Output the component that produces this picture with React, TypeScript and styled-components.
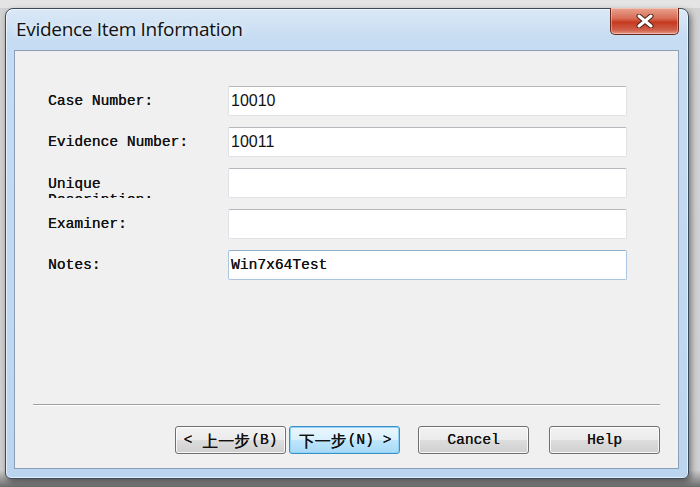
import React from "react";
import styled, { createGlobalStyle } from "styled-components";

const Global = createGlobalStyle`
  html, body { margin: 0; padding: 0; }
  body { width: 700px; height: 487px; overflow: hidden; background: #c9c9c9; }
`;

const Screen = styled.div`
  width: 700px;
  height: 487px;
  background: linear-gradient(180deg, #e4e4e4 0px, #e4e4e4 8px, #d2d2d2 8px, #cfcfcf 470px, #6d6d6d 487px);
  padding: 8px 0 0 5px;
  box-sizing: border-box;
`;

const Window = styled.div`
  width: 684px;
  height: 471px;
  box-sizing: border-box;
  border: 1px solid #3a4a5a;
  border-radius: 8px 8px 6px 6px;
  background: linear-gradient(180deg, #dbe9f7 0px, #c6dcf2 30px, #bcd5ef 100%);
  box-shadow: 2px 3px 6px rgba(0, 0, 0, 0.45), inset 0 0 0 1px rgba(255, 255, 255, 0.6);
  display: flex;
  flex-direction: column;
  padding: 0 9px 9px 8px;
`;

const TitleBar = styled.div`
  height: 41px;
  display: flex;
  justify-content: space-between;
  align-items: flex-start;
  flex-shrink: 0;
`;

const Title = styled.div`
  font-family: "Open Sans", "Noto Sans", sans-serif;
  font-size: 19px;
  color: #111;
  padding: 7px 0 0 2px;
  letter-spacing: -0.3px;
  text-shadow: 0 0 6px rgba(255, 255, 255, 0.9);
`;

const CloseButton = styled.div`
  width: 69px;
  height: 27px;
  margin-top: -1px;
  box-sizing: border-box;
  border: 1px solid #6b2a20;
  border-top: none;
  border-radius: 0 0 5px 5px;
  background: linear-gradient(180deg, #e8a490 0%, #d96c55 40%, #c53a1f 55%, #d0604a 85%, #e79a86 100%);
  box-shadow: inset 0 0 0 1px rgba(255, 255, 255, 0.35);
  display: flex;
  align-items: center;
  justify-content: center;
`;

const Client = styled.div`
  flex: 1;
  background: #f0f0f0;
  border: 1px solid #8ba0b8;
  display: flex;
  flex-direction: column;
  padding: 35px 18px 14px 18px;
`;

const Form = styled.div`
  display: flex;
  flex-direction: column;
  gap: 11px;
  padding-left: 15px;
`;

const Row = styled.div`
  display: grid;
  grid-template-columns: 180px 399px;
  align-items: center;
  height: 30px;
`;

const Label = styled.div<{ $clip?: boolean }>`
  font-family: "Liberation Mono", "DejaVu Sans Mono", monospace;
  font-size: 14.6px;
  color: #111;
  line-height: 16px;
  white-space: ${(p) => (p.$clip ? "normal" : "nowrap")};
  width: ${(p) => (p.$clip ? "130px" : "auto")};
  height: ${(p) => (p.$clip ? "22px" : "auto")};
  overflow: hidden;
  align-self: ${(p) => (p.$clip ? "end" : "center")};
  text-shadow: 0.2px 0 0 #111;
`;

const Field = styled.div<{ $focus?: boolean; $mono?: boolean }>`
  height: 30px;
  box-sizing: border-box;
  background: #fff;
  border: 1px solid ${(p) => (p.$focus ? "#a9c5df" : "#dfe3e8")};
  border-top-color: ${(p) => (p.$focus ? "#8fb0cf" : "#b5b8bd")};
  border-radius: 2px;
  padding: 0 2px;
  display: flex;
  align-items: center;
  font-family: ${(p) =>
    p.$mono ? `"Liberation Mono", "DejaVu Sans Mono", monospace` : `"Liberation Sans", Arial, sans-serif`};
  font-size: ${(p) => (p.$mono ? "14.6px" : "16px")};
  color: #111;
  text-shadow: ${(p) => (p.$mono ? "0.2px 0 0 #111" : "none")};
`;

const Spacer = styled.div`
  flex: 1;
`;

const Separator = styled.div`
  height: 1px;
  background: #a0a0a0;
  border-bottom: 1px solid #fff;
  margin-bottom: 20px;
`;

const ButtonRow = styled.div`
  display: flex;
  justify-content: flex-end;
  align-items: center;
`;

const Button = styled.div<{ $default?: boolean; $gap?: number }>`
  width: 111px;
  height: 28px;
  box-sizing: border-box;
  margin-left: ${(p) => p.$gap ?? 0}px;
  border: 1px solid ${(p) => (p.$default ? "#3c8fc7" : "#707070")};
  border-radius: 3px;
  background: ${(p) =>
    p.$default
      ? "linear-gradient(180deg, #eaf6fd 0%, #d9f0fc 50%, #bee6fd 51%, #a7d9f5 100%)"
      : "linear-gradient(180deg, #f2f2f2 0%, #ebebeb 50%, #dddddd 51%, #cfcfcf 100%)"};
  box-shadow: inset 0 0 0 1px ${(p) => (p.$default ? "#8ed3f6" : "rgba(255,255,255,0.8)")};
  display: flex;
  align-items: center;
  justify-content: center;
  font-family: "Liberation Mono", "Noto Sans CJK SC", monospace;
  font-size: 14.6px;
  color: #111;
  white-space: pre;
  text-shadow: 0.2px 0 0 #111;
`;

const Cjk = styled.span`
  font-family: "Noto Sans CJK SC", sans-serif;
  font-size: 16px;
  margin: 0 1px;
`;

const CloseIcon = () => (
  <svg width="18" height="14" viewBox="0 0 18 14">
    <path d="M3 2 L15 12 M15 2 L3 12" stroke="#4a2018" strokeWidth="5" strokeLinecap="round" />
    <path d="M3 2 L15 12 M15 2 L3 12" stroke="#ffffff" strokeWidth="3" strokeLinecap="round" />
  </svg>
);

const fields: { label: string; value: string; clip?: boolean; focus?: boolean; mono?: boolean }[] = [
  { label: "Case Number:", value: "10010" },
  { label: "Evidence Number:", value: "10011" },
  { label: "Unique Description:", value: "", clip: true },
  { label: "Examiner:", value: "" },
  { label: "Notes:", value: "Win7x64Test", focus: true, mono: true },
];

export default function App() {
  return (
    <Screen>
      <Global />
      <Window>
        <TitleBar>
          <Title>Evidence Item Information</Title>
          <CloseButton>
            <CloseIcon />
          </CloseButton>
        </TitleBar>
        <Client>
          <Form>
            {fields.map((f) => (
              <Row key={f.label}>
                <Label $clip={f.clip}>{f.label}</Label>
                <Field $focus={f.focus} $mono={f.mono}>
                  {f.value}
                </Field>
              </Row>
            ))}
          </Form>
          <Spacer />
          <Separator />
          <ButtonRow>
            <Button>
              {"< "}
              <Cjk>上一步</Cjk>
              {"(B)"}
            </Button>
            <Button $default $gap={3}>
              <Cjk>下一步</Cjk>
              {"(N) >"}
            </Button>
            <Button $gap={18}>Cancel</Button>
            <Button $gap={20}>Help</Button>
          </ButtonRow>
        </Client>
      </Window>
    </Screen>
  );
}
